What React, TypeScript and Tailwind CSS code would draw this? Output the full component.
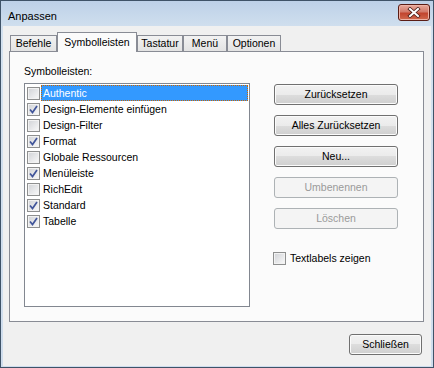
import React from 'react';

const items: { label: string; checked: boolean }[] = [
  { label: 'Authentic', checked: false },
  { label: 'Design-Elemente einfügen', checked: true },
  { label: 'Design-Filter', checked: false },
  { label: 'Format', checked: true },
  { label: 'Globale Ressourcen', checked: false },
  { label: 'Menüleiste', checked: true },
  { label: 'RichEdit', checked: false },
  { label: 'Standard', checked: true },
  { label: 'Tabelle', checked: true },
];

const tabs = [
  { label: 'Befehle', w: 'w-[47px]' },
  { label: 'Symbolleisten', w: 'w-[80px]', active: true },
  { label: 'Tastatur', w: 'w-[46px]' },
  { label: 'Menü', w: 'w-[44px]' },
  { label: 'Optionen', w: 'w-[54px]' },
];

function CheckBox({ checked }: { checked: boolean }) {
  return (
    <span className="flex h-[13px] w-[13px] shrink-0 items-center justify-center border border-[#8e8f8f] bg-linear-to-br from-[#d0d2d6] to-[#fafafa] shadow-[inset_0_0_0_1px_#f2f2f2]">
      {checked && (
        <svg width="11" height="11" viewBox="0 0 11 11">
          <path d="M2 5.5 L4.5 8.5 L9 2" fill="none" stroke="#41559a" strokeWidth={1.7} />
        </svg>
      )}
    </span>
  );
}

function Button({ children, disabled, className = '' }: { children: React.ReactNode; disabled?: boolean; className?: string }) {
  return (
    <button
      type="button"
      className={
        disabled
          ? `flex h-[21px] items-center justify-center rounded-[3px] border border-[#adb2b5] bg-[#f4f4f4] text-[#9a9a9a] ${className}`
          : `flex h-[21px] items-center justify-center rounded-[3px] border border-[#707070] bg-[linear-gradient(#f2f2f2,#ebebeb_50%,#dddddd_50%,#cfcfcf)] shadow-[inset_0_0_0_1px_#fbfbfb] text-black ${className}`
      }
    >
      {children}
    </button>
  );
}

export default function App() {
  return (
    <div className="flex h-[368px] w-[434px] flex-col border border-[#3f5368] bg-[linear-gradient(#bdd1e8,#d3e1ef_30px,#cfdded)] font-['Liberation_Sans',Arial,sans-serif] text-[10.5px] leading-[13px] text-black">
      {/* title bar */}
      <div className="flex h-[25px] items-start justify-between pl-[7px] pr-[3px] pt-[3px]">
        <span className="mt-[6px] text-[11px]">Anpassen</span>
        <div className="flex h-[17px] w-[32px] items-center justify-center rounded-[3px] border border-[#5a1c14] bg-[linear-gradient(#e9a99b,#d27a6a_45%,#c2452f_55%,#d06a4e)] shadow-[inset_0_0_0_1px_#eeb3a6]">
          <svg width="14" height="11" viewBox="0 0 14 11">
            <path d="M3 2 L11 9 M11 2 L3 9" stroke="#4b1d17" strokeWidth={3.6} strokeLinecap="square" />
            <path d="M3 2 L11 9 M11 2 L3 9" stroke="#ffffff" strokeWidth={2} strokeLinecap="square" />
          </svg>
        </div>
      </div>

      {/* client area */}
      <div className="mx-[2px] mb-[1px] flex flex-1 flex-col bg-[#f0f0f0] pl-[6px] pr-[7px] pt-[6px] pb-[10px]">
        <div className="ml-[1px] flex items-end">
          {tabs.map(t =>
            t.active ? (
              <div
                key={t.label}
                className={`relative z-10 mb-[-1px] flex h-[20px] items-start justify-center border border-b-0 border-[#898c95] bg-[#fbfbfb] pt-[3px] ${t.w}`}
              >
                {t.label}
              </div>
            ) : (
              <div
                key={t.label}
                className={`flex h-[16px] items-center justify-center border border-b-0 border-[#898c95] bg-[linear-gradient(#f2f2f2,#e3e3e3)] ${t.w}`}
              >
                {t.label}
              </div>
            )
          )}
        </div>

        <div className="flex border border-[#898c95] bg-[#fbfbfb] pl-[14px] pt-[13px] pb-[14px]">
          <div className="flex flex-col">
            <span>Symbolleisten:</span>
            <div className="mt-[5px] flex h-[224px] w-[226px] flex-col border border-[#828790] bg-white pl-[2px] pr-[1px] pt-[1px]">
              {items.map((it, i) => (
                <div key={it.label} className="flex h-[16px] items-center gap-[1px]">
                  <CheckBox checked={it.checked} />
                  {i === 0 ? (
                    <span className="flex h-[16px] flex-1 items-center border border-dotted border-[#cc6600] bg-[#3399ff] pl-[1px] text-white">
                      {it.label}
                    </span>
                  ) : (
                    <span className="pl-[2px]">{it.label}</span>
                  )}
                </div>
              ))}
            </div>
          </div>

          <div className="ml-[24px] flex w-[124px] flex-col gap-[10px] pt-[19px]">
            <Button>Zurücksetzen</Button>
            <Button>Alles Zurücksetzen</Button>
            <Button>Neu...</Button>
            <Button disabled>Umbenennen</Button>
            <Button disabled>Löschen</Button>
            <label className="-ml-[1px] mt-[13px] flex h-[13px] items-center gap-[4px]">
              <CheckBox checked={false} />
              <span>Textlabels zeigen</span>
            </label>
          </div>
        </div>

        <div className="mt-[12px] flex justify-end pr-[2px]">
          <Button className="w-[73px]">Schließen</Button>
        </div>
      </div>
    </div>
  );
}
